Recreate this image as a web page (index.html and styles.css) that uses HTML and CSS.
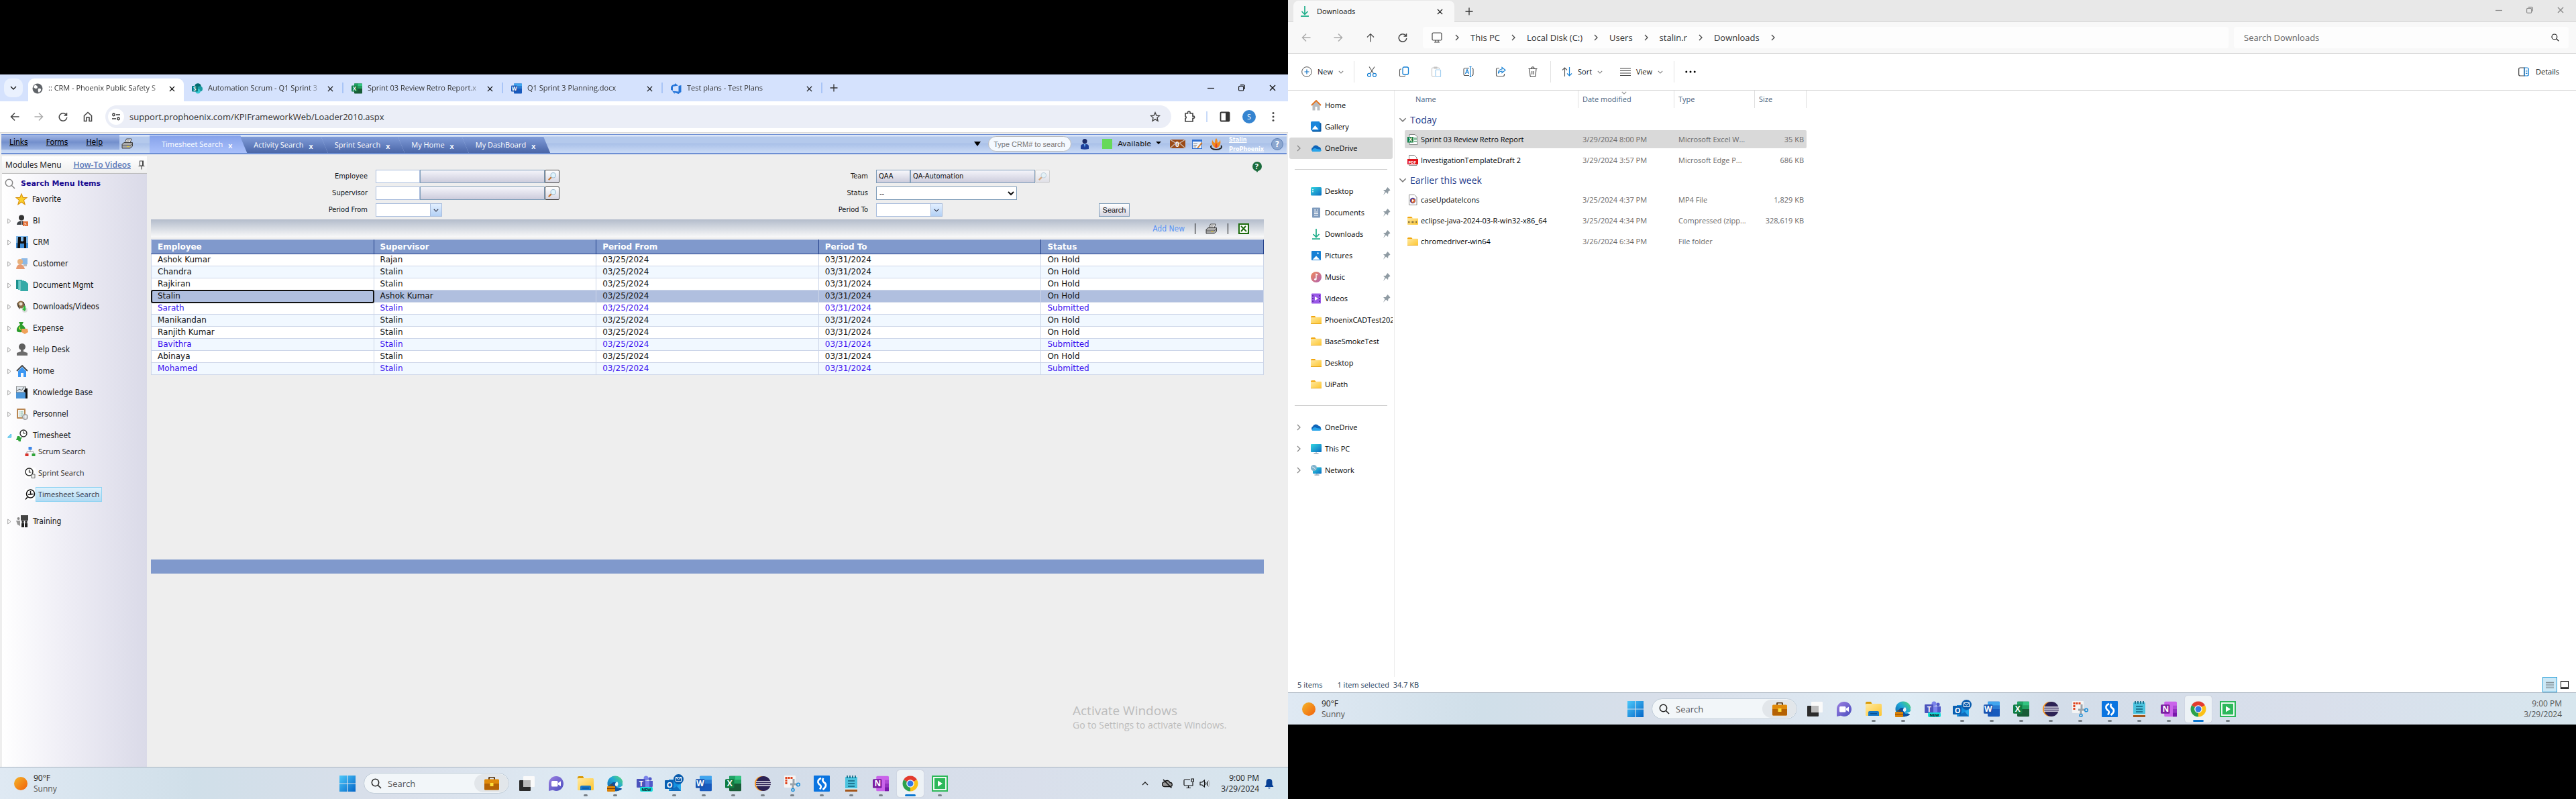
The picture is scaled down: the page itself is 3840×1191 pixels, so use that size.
FILE: index.html
```html
<!DOCTYPE html>
<html lang="en">
<head>
<meta charset="utf-8">
<title>CRM - Phoenix Public Safety</title>
<link rel="stylesheet" href="styles.css">
</head>
<body>
<svg class="paints" width="0" height="0" aria-hidden="true">
<defs>
<linearGradient id="gSun" x1="0" y1="0" x2="1" y2="1"><stop offset="0" stop-color="#f3b62a"/><stop offset="1" stop-color="#f2600c"/></linearGradient>
<linearGradient id="gWin" x1="0" y1="0" x2="1" y2="1"><stop offset="0" stop-color="#4cc8fa"/><stop offset="1" stop-color="#0466c8"/></linearGradient>
<linearGradient id="gFold" x1="0" y1="0" x2="1" y2="1"><stop offset="0" stop-color="#ffe9a0"/><stop offset="1" stop-color="#fdc52f"/></linearGradient>
<linearGradient id="gTeal" x1="0" y1="0" x2="1" y2="1"><stop offset="0" stop-color="#33d6e0"/><stop offset="1" stop-color="#0a6cc2"/></linearGradient>
<linearGradient id="gMus" x1="0" y1="0" x2="1" y2="1"><stop offset="0" stop-color="#f08a5a"/><stop offset="1" stop-color="#b060b0"/></linearGradient>
<linearGradient id="gEdge" x1="0" y1="1" x2="1" y2="0"><stop offset="0" stop-color="#0c59a4"/><stop offset=".55" stop-color="#1fa6d8"/><stop offset="1" stop-color="#5be06a"/></linearGradient>
<linearGradient id="gChat" x1="0" y1="0" x2="1" y2="1"><stop offset="0" stop-color="#9b7fe0"/><stop offset="1" stop-color="#4c4fc0"/></linearGradient>
</defs>
</svg>
<svg class="symbols" aria-hidden="true">
<symbol id="chev" viewBox="0 0 8 12"><path d="M2 2l4 4-4 4" fill="none" stroke="currentColor" stroke-width="1.3"/></symbol>
<symbol id="down" viewBox="0 0 10 6"><path d="M1 1l4 4 4-4" fill="none" stroke="currentColor" stroke-width="1.3"/></symbol>
<symbol id="close" viewBox="0 0 10 10"><path d="M1 1l8 8M9 1l-8 8" stroke="currentColor" stroke-width="1.4"/></symbol>
<symbol id="min" viewBox="0 0 10 10"><path d="M0 5.5h10" stroke="currentColor" stroke-width="1.2"/></symbol>
<symbol id="rest" viewBox="0 0 10 10"><rect x=".6" y="2.4" width="7" height="7" rx="1.5" fill="none" stroke="currentColor" stroke-width="1.1"/><path d="M3 .6h4.400q2 0 2 2V7" fill="none" stroke="currentColor" stroke-width="1.1"/></symbol>
<symbol id="plus" viewBox="0 0 12 12"><path d="M6 .5v11M.5 6h11" stroke="currentColor" stroke-width="1.3"/></symbol>
<symbol id="back" viewBox="0 0 14 14"><path d="M13.500 7H1.500M7 1.500L1.500 7 7 12.500" fill="none" stroke="currentColor" stroke-width="1.500"/></symbol>
<symbol id="fwd" viewBox="0 0 14 14"><path d="M.5 7h12M7 1.500L12.500 7 7 12.500" fill="none" stroke="currentColor" stroke-width="1.500"/></symbol>
<symbol id="up" viewBox="0 0 14 14"><path d="M7 13.500V1.500M2 6.500l5-5 5 5" fill="none" stroke="currentColor" stroke-width="1.200"/></symbol>
<symbol id="reload" viewBox="0 0 14 14"><path d="M12 4.500A5.800 5.800 0 1 0 12.800 8M12.500 1v4h-4" fill="none" stroke="currentColor" stroke-width="1.500"/></symbol>
<symbol id="home" viewBox="0 0 14 16"><path d="M1.500 6.500L7 1.500l5.500 5V14.500H9V9H5v5.500H1.500z" fill="none" stroke="currentColor" stroke-width="1.600"/></symbol>
<symbol id="tune" viewBox="0 0 14 14"><path d="M7 4h6M1 10h6" stroke="#333" stroke-width="1.600"/><circle cx="3.500" cy="4" r="1.700" fill="none" stroke="#333" stroke-width="1.400"/><circle cx="10.500" cy="10" r="1.700" fill="none" stroke="#333" stroke-width="1.400"/></symbol>
<symbol id="star" viewBox="0 0 16 16"><path d="M8 1.800l1.900 4.300 4.600.4-3.500 3.100 1.100 4.600L8 11.800l-4.100 2.400L5 9.600 1.500 6.500l4.600-.4z" fill="none" stroke="#444" stroke-width="1.400"/></symbol>
<symbol id="puzzle" viewBox="0 0 16 18"><path d="M2 4h3.500V2.800a1.800 1.800 0 0 1 3.600 0V4H13v4.200h1a1.600 1.600 0 0 1 0 3.200h-1V16H2v-4.300q2.500-1.700 0-3.500z" fill="none" stroke="#444" stroke-width="1.700"/></symbol>
<symbol id="panel" viewBox="0 0 16 16"><rect x="1.500" y="1.500" width="13" height="13" rx="1" fill="none" stroke="#333" stroke-width="1.800"/><path d="M9 2h6v12H9z" fill="#333"/></symbol>
<symbol id="dots" viewBox="0 0 16 16"><circle cx="8" cy="2.500" r="1.500" fill="#444"/><circle cx="8" cy="8" r="1.500" fill="#444"/><circle cx="8" cy="13.500" r="1.500" fill="#444"/></symbol>
<symbol id="mag" viewBox="0 0 16 16"><circle cx="6.500" cy="6.500" r="5.200" fill="none" stroke="currentColor" stroke-width="1.500"/><path d="M10.200 10.200L15 15" stroke="currentColor" stroke-width="1.600"/></symbol>
<symbol id="globe" viewBox="0 0 16 16"><circle cx="8" cy="8" r="7.500" fill="#5f6368"/><path d="M4 2.500q4 1 4 3.500t-3 2q-1 0-3-2zM9 8q5-1 4 3l-3 3q-2-2-1-6z" fill="#fff"/></symbol>
<symbol id="sp" viewBox="0 0 16 16"><circle cx="9" cy="5" r="4.800" fill="#036c70"/><circle cx="12" cy="8.500" r="4" fill="#1a9ba1"/><circle cx="9" cy="12" r="3.600" fill="#37c6d0"/><rect y="4" width="9" height="8.500" rx="1" fill="#03787c"/><text x="2" y="11" class="glyph">S</text></symbol>
<symbol id="word" viewBox="0 0 16 16"><rect x="4" y=".5" width="12" height="15" rx="1" fill="#185abd"/><path d="M4 .5h12v4H4z" fill="#41a5ee"/><path d="M4 4.500h12V8H4z" fill="#2b7cd3"/><rect y="3.500" width="9" height="9" rx="1" fill="#1b54b0"/><text x=".7" y="10.800" class="glyph">W</text></symbol>
<symbol id="excel" viewBox="0 0 16 16"><rect x="4" y=".5" width="12" height="15" rx="1" fill="#185c37"/><path d="M4 .5h6v4H4zM4 4.500h6V8H4z" fill="#21a366"/><path d="M10 .5h6v4h-6z" fill="#33c481"/><path d="M10 4.500h6V8h-6z" fill="#22a060"/><rect y="3.500" width="9" height="9" rx="1" fill="#107c41"/><text x="1.800" y="10.800" class="glyph">X</text></symbol>
<symbol id="devops" viewBox="0 0 16 16"><path d="M15.500 3v10l-4 3-6-2v2L2 11.500l9.500 1V4z M0 5.500L2 3l4-1.500V0l5 3.500L3 5v6l-3-1z" fill="#2676d9"/></symbol>
<symbol id="onenote" viewBox="0 0 16 16"><rect x="3.500" y=".5" width="12.500" height="15" rx="1" fill="#ca64ea"/><path d="M12 4.500h4V8h-4z" fill="#ae4bd5"/><path d="M12 8h4v3.500h-4z" fill="#9332bf"/><path d="M12 11.500h4v4h-4z" fill="#7719aa"/><rect y="3.500" width="9" height="9" rx="1" fill="#7a1fa2"/><text x="1.600" y="10.800" class="glyph">N</text></symbol>
<symbol id="folder" viewBox="0 0 16 16"><path d="M0 3.500q0-1.500 1.500-1.500H6l2 2.500H0z" fill="#f2a60d"/><path d="M0 4.500h6L8 3.800h7q1 0 1 1V13q0 1-1 1H1q-1 0-1-1z" fill="url(#gFold)"/><path d="M0 13.500h16" stroke="#e8a81c"/></symbol>
<symbol id="fe" viewBox="0 0 24 24"><path d="M0 3q0-2 2-2h6l2 4H0z" fill="#d99a07"/><rect y="4" width="24" height="18" rx="1.500" fill="url(#gFold)"/><path d="M4 22v-5q0-2 2-2h12q2 0 2 2v5z" fill="#1678c8"/><path d="M7 18h10v1.500H7z" fill="#0b4f90"/></symbol>
<symbol id="edge" viewBox="0 0 24 24"><circle cx="12" cy="12" r="11.500" fill="url(#gEdge)"/><path d="M12 23q11 0 11-6-6 4-9 1-3-4 0-7-7-3-9 4 1 7 7 8z" fill="#0f4f9c"/><path d="M12 15q-1-4 3-6 3 4 0 7 4 3 8-1-1-5 0-5v10z" fill="#e8f2f8"/><rect y="16" width="12" height="8" rx="1" fill="#d98208"/><path d="M4 16v-2h4v2M0 19.500h12" fill="none" stroke="#7a3d03"/></symbol>
<symbol id="start" viewBox="0 0 24 24"><path d="M0 0h11.400v11.400H0zM12.600 0H24v11.400H12.600zM0 12.600h11.400V24H0zM12.600 12.600H24V24H12.600z" fill="url(#gWin)"/></symbol>
<symbol id="brief" viewBox="0 0 24 20"><path d="M8 4V2q0-1.500 1.500-1.500h5Q16 .5 16 2v2" fill="none" stroke="#5a3a16" stroke-width="2"/><rect x="1" y="3.500" width="22" height="16" rx="1.500" fill="#e08a0a"/><path d="M1 10h22v8q0 1.500-1.500 1.500h-19Q1 19.500 1 18z" fill="#b56204"/><rect x="9.500" y="9" width="5" height="5" fill="#ffdf3a"/></symbol>
<symbol id="tview" viewBox="0 0 24 24"><rect x="1" y="7" width="17" height="16" rx="1" fill="#2b2b2b"/><rect x="7" y="1" width="17" height="16" rx="1" fill="#fafafa"/><path d="M7 7h11v10H7z" fill="#bcbcbc"/></symbol>
<symbol id="chat" viewBox="0 0 24 24"><path d="M12 1a11 11 0 1 1-5 20.800L1 23V12A11 11 0 0 1 12 1z" fill="url(#gChat)"/><rect x="5" y="8" width="9.500" height="8.500" rx="1.500" fill="#fff"/><path d="M15 11l4-2.500v7.500L15 13.500z" fill="#fff"/></symbol>
<symbol id="teams" viewBox="0 0 24 24"><circle cx="14" cy="4" r="3.500" fill="#7b83eb"/><circle cx="20" cy="5" r="2.600" fill="#5059c9"/><path d="M15 8h9v8q-2 5-9 4z" fill="#5059c9"/><path d="M8 8h11v9q-2 5-11 2z" fill="#7b83eb"/><rect y="5" width="13" height="13" rx="1" fill="#4b53bc"/><text x="3.500" y="15.500" class="glyph glyph-l">T</text><rect x="5" y="17" width="19" height="7" rx="2" fill="#12dcd8"/><text x="7.500" y="22.800" class="glyph glyph-n">NEW</text></symbol>
<symbol id="outlook" viewBox="0 0 28 28"><path d="M6 8h18v15H6z" fill="#1490df"/><path d="M6 14l9 6 9-6v11H6z" fill="#28a8ea"/><path d="M6 25l12-7 6 7z" fill="#0f6cbd"/><rect y="9" width="13" height="13" rx="1" fill="#0a5eb0"/><text x="2.800" y="19.500" class="glyph glyph-l">O</text><circle cx="20.500" cy="7.500" r="7.500" fill="#0a5cad"/><rect x="16.500" y="4.500" width="8" height="6" fill="none" stroke="#fff"/><path d="M16.500 5l4 3 4-3" fill="none" stroke="#fff"/></symbol>
<symbol id="eclipse" viewBox="0 0 24 24"><circle cx="11" cy="12" r="11" fill="#f7941e"/><circle cx="13" cy="12" r="11" fill="#2c2255"/><path d="M2 9h22M2 12h22M2 15h22" stroke="#e6e6f0" stroke-width="1.500"/></symbol>
<symbol id="snip" viewBox="0 0 24 24"><rect width="17" height="18" rx="1" fill="#f4f4f4"/><path d="M3 13V3.500h10" fill="none" stroke="#e0441f" stroke-width="3" stroke-dasharray="3 1"/><path d="M14 5v9M9 13h9M13 13v6" stroke="#9aa3ab" stroke-width="3"/><circle cx="21" cy="13.500" r="2.300" fill="none" stroke="#1d8fd8" stroke-width="1.600"/><circle cx="13" cy="21.500" r="2" fill="none" stroke="#1d8fd8" stroke-width="1.600"/></symbol>
<symbol id="sapp" viewBox="0 0 24 24"><rect width="24" height="24" rx="1" fill="#0a74e0"/><path d="M11 4Q5.500 6.500 6.500 10.500 7.500 13 10 14.500q2 2.500-1 6" fill="none" stroke="#fff" stroke-width="2.600"/><path d="M14.500 4q-2.500 3 .5 6 3.500 2 3 5t-4.500 6" fill="none" stroke="#fff" stroke-width="2.600"/></symbol>
<symbol id="notep" viewBox="0 0 24 24"><rect x="3" y="2" width="18" height="20" rx="1" fill="#4cc3de"/><path d="M6 0v4M10 0v4M14 0v4M18 0v4" stroke="#146a86" stroke-width="1.800"/><path d="M7 8h10M7 12h10M7 16h10" stroke="#11607c" stroke-width="1.600"/><path d="M3 20.500h18V24H3z" fill="#a4561b"/><path d="M3 20h18" stroke="#fff" stroke-width="1.400"/></symbol>
<symbol id="chrome" viewBox="0 0 24 24"><path d="M12 12L2 6.300A11.500 11.500 0 0 1 22 6.300z" fill="#e33b2e"/><path d="M12 12L22 6.300A11.500 11.500 0 0 1 12 23.500z" fill="#fbc116"/><path d="M12 12v11.500A11.500 11.500 0 0 1 2 6.300z" fill="#2da14c"/><circle cx="12" cy="12" r="5.800" fill="#fff"/><circle cx="12" cy="12" r="4.500" fill="#3277e6"/></symbol>
<symbol id="play" viewBox="0 0 24 24"><rect width="24" height="24" fill="#2db85a"/><rect x="3" y="3" width="18" height="18" fill="none" stroke="#fff" stroke-width="1.800"/><path d="M9 7.500v9l7-4.500z" fill="#fff"/></symbol>
<symbol id="sun" viewBox="0 0 20 20"><circle cx="10" cy="10" r="10" fill="url(#gSun)"/></symbol>
<symbol id="cloud" viewBox="0 0 16 16"><path d="M3.500 13a3.500 3.500 0 0 1-.5-6.500A5 5 0 0 1 12 6a3.600 3.600 0 0 1 .5 7z" fill="#0f64b8"/><path d="M1.500 12Q4 6 9 9l6.500 1q1 3-3 3h-9q-1.500 0-2-1z" fill="#28a4ea"/></symbol>
<symbol id="cloudoff" viewBox="0 0 16 14"><path d="M4 11.500a3.500 3.500 0 0 1 0-7 4.500 4.500 0 0 1 8 1 3 3 0 0 1 .5 6z" fill="#999" stroke="#111" stroke-width="1.300"/><path d="M2 1l12.500 12.500" stroke="#111" stroke-width="1.500"/></symbol>
<symbol id="net" viewBox="0 0 16 16"><path d="M10 2H2.500Q1 2 1 3.500v6Q1 11 2.500 11H14V6M7.500 11v3.500M4.500 14.500H11M12 1h3.400v4H12z" fill="none" stroke="#111" stroke-width="1.200"/></symbol>
<symbol id="vol" viewBox="0 0 16 14"><path d="M1 5h3l3.500-3v10L4 9H1z" fill="none" stroke="#111" stroke-width="1.100"/><path d="M9.500 5q1 2 0 4M11.500 3.500q2 3.500 0 7" fill="none" stroke="#111" stroke-width="1.100"/><path d="M13.500 2q3 5 0 10" fill="none" stroke="#aaa"/></symbol>
<symbol id="bell" viewBox="0 0 14 16"><path d="M7 1q4.500 0 4.500 5v3.500L13.500 13H.5l2-3.500V6Q2.500 1 7 1zM5 14h4q-2 3-4 0z" fill="#063f95"/></symbol>
<symbol id="pin" viewBox="0 0 12 14"><path d="M7.500 1L11.500 5.500 8.500 7.500 8 11 5 8.500 1 13 3.500 7.500 1 5h3.500z" fill="#8f9ba3"/></symbol>
<symbol id="tri" viewBox="0 0 6 9"><path d="M.7 1v7L5 4.500z" fill="#fff" stroke="#999" stroke-width=".9"/></symbol>
<symbol id="trio" viewBox="0 0 6 6"><path d="M.5 5.500h5v-5z" fill="#8ad8f5" stroke="#27aee0"/></symbol>
<symbol id="printer" viewBox="0 0 18 16"><path d="M5 7l2.500-6H15l-2 6z" fill="#fff" stroke="#333" stroke-width=".9"/><path d="M7.500 3h5M7 5h5" stroke="#555" stroke-width=".8"/><path d="M1 9l3-2.500h12.500V12L13 15H1z" fill="#aaa" stroke="#333" stroke-width=".9"/><path d="M1 11h12l3.500-3" fill="none" stroke="#444" stroke-width=".8"/><path d="M8 12.500h4" stroke="#e5d23a"/></symbol>
<symbol id="lens" viewBox="0 0 16 16"><path d="M2 14l5-5" stroke="#c9762f" stroke-width="2.500"/><circle cx="10" cy="6" r="4.300" fill="#dff3fb" stroke="#9db8cc" stroke-width="1.200"/></symbol>
<symbol id="m-fav" viewBox="0 0 16 16"><path d="M8 .8l2 5h5.300L11 9.200l1.600 5.800L8 11.800 3.400 15 5 9.200.700 5.800H6z" fill="#fbd02c" stroke="#d99411"/></symbol>
<symbol id="m-bi" viewBox="0 0 18 18"><circle cx="8" cy="4.500" r="4" fill="#333"/><path d="M1 15q0-5 7-6 6 0 7 6z" fill="#3f4348"/><path d="M8 9v6" stroke="#ddd"/><rect x="10" y="10" width="8" height="7" fill="#e0703a"/><path d="M12 15.500h1M12 12.500q3 0 3 3" stroke="#fff" fill="none"/></symbol>
<symbol id="m-crm" viewBox="0 0 18 18"><rect width="18" height="18" fill="#7fb8ea"/><path d="M0 10h18v8H0z" fill="#3d8bd4"/><path d="M3 1h4v6l2 1 2-1V1h4v17h-3v-7H6v7H2z" fill="#111"/></symbol>
<symbol id="m-cust" viewBox="0 0 18 18"><rect x="8" y="1" width="9" height="9" fill="#8db9e6"/><circle cx="6" cy="6" r="4" fill="#e8b07a"/><path d="M0 17q1-7 6-7t7 7z" fill="#e79a70"/><path d="M11 10h5v3h-5z" fill="#bbb"/></symbol>
<symbol id="m-doc" viewBox="0 0 18 18"><path d="M0 1h9v14H0z" fill="#1c8f8d"/><path d="M3 2h9v14H3z" fill="#55c0bd"/><path d="M6 3h8l4 4v11H6z" fill="#36aaa7"/><path d="M6 3v15" stroke="#c8efee" stroke-width=".8"/></symbol>
<symbol id="m-down" viewBox="0 0 18 18"><circle cx="7" cy="6" r="5.500" fill="#8a6b45"/><circle cx="7" cy="5" r="2.500" fill="#e8dfce"/><path d="M2 4l3 9M11 2l2 6" stroke="#333"/><circle cx="13" cy="14" r="4" fill="#dcdcdc"/><path d="M11 8v4H8l5 4 2-4h-1V8z" fill="#2db83c"/></symbol>
<symbol id="m-exp" viewBox="0 0 18 18"><path d="M4 0h7L9 4q6 4 5 9-7 4-13 1Q0 8 6 4z" fill="#2d9c2d"/><path d="M8 10h9l1 5-5 3-5-3z" fill="#f0a25a"/><path d="M6 7q-3 3 1 4" stroke="#d9e84a" stroke-width="1.500" fill="none"/></symbol>
<symbol id="m-help" viewBox="0 0 18 18"><circle cx="9" cy="5" r="5" fill="#5e5e5e"/><path d="M7 9h4v3l6 2v4H1v-4l6-2z" fill="#6c6c6c"/></symbol>
<symbol id="m-home" viewBox="0 0 18 18"><path d="M1 9l8-8 8 8" fill="none" stroke="#444" stroke-width="1.800"/><path d="M3 9l6-6 6 6v9h-4v-6H7v6H3z" fill="#3b97f3"/></symbol>
<symbol id="m-kb" viewBox="0 0 18 18"><rect width="14" height="9" fill="#dfe6ec" stroke="#444"/><path d="M1 7l4-3 3 2 4-5" fill="none" stroke="#555"/><path d="M0 9h14v9H0z" fill="#4b95d8"/><path d="M14 3h3v15h-3V9l-3-2z" fill="#111"/></symbol>
<symbol id="m-pers" viewBox="0 0 18 18"><rect x="1" y="1" width="13" height="15" rx="1" fill="#b98652"/><rect x="3" y="3" width="9" height="11" fill="#f5f5f2"/><path d="M4.500 6h1M6.500 6h4M4.500 9h1M6.500 9h4M4.500 12h1M6.500 12h3" stroke="#6a9"/><circle cx="13.500" cy="13.500" r="4" fill="#c9cdd0" stroke="#888"/><path d="M13.500 11v5M11 13.500h5" stroke="#fff"/></symbol>
<symbol id="m-time" viewBox="0 0 18 18"><circle cx="11" cy="6" r="5" fill="#fff" stroke="#222" stroke-width="1.300"/><path d="M11 3v3h3" fill="none" stroke="#222"/><path d="M2 10h3l1 2h3l-2 3v3H4l-1-2H0z" fill="#2fa43a"/></symbol>
<symbol id="m-scrum" viewBox="0 0 16 16"><path d="M8 5v4M3 11V8.500h10V11" stroke="#999" fill="none"/><path d="M5.500 1h5v4.500h-5z" fill="#3d86e8"/><path d="M.5 11h5v4h-5z" fill="#d8322a"/><path d="M10.500 11h5v4h-5z" fill="#2fa43a"/></symbol>
<symbol id="m-sprint" viewBox="0 0 16 16"><rect width="16" height="16" fill="#fff"/><circle cx="6.500" cy="6.500" r="5.500" fill="#fff" stroke="#222" stroke-width="1.400"/><path d="M6.500 3v4h3" fill="none" stroke="#222" stroke-width="1.200"/><path d="M10 10h5v5.500h-5z" fill="#eee" stroke="#666"/></symbol>
<symbol id="m-tss" viewBox="0 0 16 16"><rect width="16" height="16" fill="#fff"/><circle cx="8.500" cy="7" r="6" fill="#fff" stroke="#111" stroke-width="1.600"/><path d="M8.500 3v4.500h4M5 8h5M4 12l-3 3.500" fill="none" stroke="#111" stroke-width="1.500"/></symbol>
<symbol id="m-train" viewBox="0 0 18 18"><rect x="7" y="0" width="11" height="8" fill="#444"/><circle cx="3.500" cy="5" r="2" fill="#888"/><path d="M0 8h6v8l-4-2z" fill="#999"/><circle cx="10" cy="10" r="1.800" fill="#222"/><circle cx="15" cy="10" r="1.800" fill="#222"/><path d="M8 12h4v6H8zM13 12h4v6h-4z" fill="#222"/></symbol>
<symbol id="person" viewBox="0 0 12 16"><circle cx="6" cy="3.500" r="3.500" fill="#1b2a66"/><path d="M0 15V11q0-3.500 6-3.500t6 3.500v4q-6 1.500-12 0z" fill="#1d3f9a"/><path d="M5 8h2l-1 5z" fill="#6fc3ff"/></symbol>
<symbol id="mail" viewBox="0 0 23 13"><rect width="23" height="13" fill="#9a4a17"/><path d="M0 0l11.500 7L23 0M0 13l8-7M23 13l-8-7" fill="none" stroke="#c9b8ac" stroke-width="1.400"/><text x="8" y="11" class="glyph glyph-m">0</text></symbol>
<symbol id="note" viewBox="0 0 16 14"><rect x=".5" y=".5" width="14" height="13" fill="#eef4fc" stroke="#2d6fd0"/><path d="M0 0h15v3H0z" fill="#2d6fd0"/><path d="M2 6h6M2 8.500h5M2 11h4" stroke="#888"/><path d="M7 13l7-9 1.500 1.500L9 13z" fill="#d87b22"/></symbol>
<symbol id="phx" viewBox="0 0 22 20"><path d="M4 12a8 4 0 1 0 14 0" fill="none" stroke="#222" stroke-width="2"/><path d="M11 16Q3 13 5 3q1 4 4 5 0-5 2-7 2 2 2 7 3-1 4-5 2 10-6 13z" fill="#f08a1c"/><path d="M11 16q-3-3 0-8 3 5 0 8z" fill="#e0402a"/></symbol>
<symbol id="xls" viewBox="0 0 16 16"><rect width="16" height="16" fill="#1d6b0d"/><path d="M2.500 2.500h11v11h-11z" fill="#fff" stroke="#fff"/><path d="M4 4l8 8M11 4l-7 8" stroke="#1d6b0d" stroke-width="2"/></symbol>
<symbol id="qgreen" viewBox="0 0 16 16"><circle cx="8" cy="7" r="7" fill="#1b6b3c"/><path d="M6 13l2 3 2-3z" fill="#1b6b3c"/><text x="4.800" y="11" class="glyph glyph-q">?</text></symbol>
<symbol id="pushpin" viewBox="0 0 10 14"><path d="M2.500 1h5v7h-5zM.5 8.500h9M5 9v4.500M6.500 1v7" fill="none" stroke="#444" stroke-width="1.100"/></symbol>
<symbol id="dl" viewBox="0 0 16 16"><path d="M8 0v12M3.500 8L8 12.500 12.500 8M2 15.200h12" fill="none" stroke="#1fae8a" stroke-width="1.700"/></symbol>
<symbol id="pc" viewBox="0 0 16 16"><rect x="1" y="1" width="14" height="11" rx="1.500" fill="none" stroke="#444" stroke-width="1.200"/><path d="M6 12v3M10 12v3M4 15h8" stroke="#444" stroke-width="1.200"/></symbol>
<symbol id="x-home" viewBox="0 0 16 16"><path d="M2.500 7L8 2l5.500 5v8.500h-4V10h-3v5.500h-4z" fill="#b9bcc0"/><path d="M1 8l7-7 7 7" fill="none" stroke="#e2711d" stroke-width="1.800"/></symbol>
<symbol id="x-gal" viewBox="0 0 16 16"><rect x="2" y="2" width="13.500" height="13.500" rx="1.500" fill="#0b5ba5"/><rect y="0" width="13.500" height="13.500" rx="1.500" fill="#1a86db"/><path d="M1.500 12l5-6 5 6z" fill="#fff"/></symbol>
<symbol id="x-pic" viewBox="0 0 16 16"><rect x="1" y="1" width="14" height="14" rx="1" fill="#1680d4"/><path d="M2.500 14L8 8.500 13.500 14z" fill="#fff"/><circle cx="10.500" cy="4.500" r="1.300" fill="#cfe8fb"/></symbol>
<symbol id="x-desk" viewBox="0 0 16 16"><rect y="2" width="16" height="12.500" rx="1.500" fill="url(#gTeal)"/><path d="M3 5v1.500M3 8v1.500" stroke="#fff" stroke-width="1.500"/></symbol>
<symbol id="x-doc" viewBox="0 0 16 16"><rect x="2" y=".5" width="12" height="15" rx="1" fill="#7f9bbd"/><path d="M5 4h3M5 7h6M5 9.500h6M5 12h6M9 4h2" stroke="#fff" stroke-width="1.200"/></symbol>
<symbol id="x-mus" viewBox="0 0 16 16"><circle cx="8" cy="8" r="8" fill="url(#gMus)"/><path d="M8 11.500V3.500l2.500 1.500" fill="none" stroke="#fff" stroke-width="1.300"/><circle cx="6.700" cy="11.300" r="1.600" fill="#fff"/></symbol>
<symbol id="x-vid" viewBox="0 0 16 16"><rect x="1" y=".5" width="14" height="15" rx="1" fill="#9a58e8"/><path d="M3 3v10M13 3v10" stroke="#4b2a85" stroke-width="1.500" stroke-dasharray="2 2"/><path d="M6 5v6l5-3z" fill="#fff"/></symbol>
<symbol id="x-pc" viewBox="0 0 16 16"><rect y="1" width="16" height="12" rx="1" fill="url(#gTeal)"/><path d="M8 13v2M4.500 15h7" stroke="#9ab" stroke-width="1.300"/></symbol>
<symbol id="x-net" viewBox="0 0 16 16"><rect x="3" y="3.500" width="13" height="9.500" rx="1" fill="url(#gTeal)"/><circle cx="4.500" cy="4.500" r="4.500" fill="#7fb2cc"/><path d="M2 3q3 0 5 4" stroke="#e4f2f8" fill="none"/><path d="M9 13v2M5.500 15h7" stroke="#9ab" stroke-width="1.300"/></symbol>
<symbol id="f-xls" viewBox="0 0 16 16"><path d="M3 .5h8L15 4v11.500H3z" fill="#fff" stroke="#888"/><path d="M10 6h4M10 8.500h4M10 11h4" stroke="#107c41"/><rect y="4" width="9" height="8.500" fill="#107c41"/><text x="2" y="11" class="glyph">X</text></symbol>
<symbol id="f-pdf" viewBox="0 0 16 16"><path d="M2.500 .5h8L14 4v11.500H2.500z" fill="#fff" stroke="#888"/><rect y="6" width="16" height="8" fill="#e2141c"/><text x="1.600" y="12.600" class="glyph glyph-s">PDF</text></symbol>
<symbol id="f-mp4" viewBox="0 0 16 16"><path d="M2.500 .5h8L14 4v11.500H2.500z" fill="#fff" stroke="#888"/><circle cx="8" cy="9" r="4.200" fill="#4b3fa0"/><circle cx="8.500" cy="9.500" r="3" fill="#e06a2c"/><path d="M7 7v4l3-2z" fill="#fff"/></symbol>
<symbol id="f-zip" viewBox="0 0 16 16"><path d="M0 3.500q0-1.500 1.500-1.500H6l2 2.500H0z" fill="#f2a60d"/><path d="M0 4.500h16V13q0 1-1 1H1q-1 0-1-1z" fill="url(#gFold)"/><path d="M1 10h14" stroke="#7b6a3c" stroke-width="2.500" stroke-dasharray="1 1"/></symbol>
<symbol id="c-new" viewBox="0 0 16 16"><circle cx="8" cy="8" r="7.300" fill="none" stroke="#555"/><path d="M8 4.500v7M4.500 8h7" stroke="#1172c4" stroke-width="1.200"/></symbol>
<symbol id="c-cut" viewBox="0 0 16 16"><path d="M4 .5l6.500 10M12 .5L5.500 10.500" stroke="#555" stroke-width="1.100"/><circle cx="4" cy="12.800" r="2.500" fill="none" stroke="#1680d4" stroke-width="1.200"/><circle cx="12" cy="12.800" r="2.500" fill="none" stroke="#1680d4" stroke-width="1.200"/></symbol>
<symbol id="c-copy" viewBox="0 0 16 16"><path d="M4 4H3Q1.500 4 1.500 5.500v8Q1.500 15 3 15h5q1.500 0 1.500-1.500" fill="none" stroke="#555" stroke-width="1.100"/><rect x="6" y="1" width="8.500" height="11" rx="2" fill="none" stroke="#1680d4" stroke-width="1.300"/></symbol>
<symbol id="c-paste" viewBox="0 0 16 16"><path d="M6 15H3Q1.500 15 1.500 13.500v-10Q1.500 2 3 2h8q1.500 0 1.500 1.500V4M5 1h4v2H5z" fill="none" stroke="#c4c4c4" stroke-width="1.100"/><rect x="7" y="5" width="7.500" height="10.500" rx="1" fill="none" stroke="#9fcdf0" stroke-width="1.200"/></symbol>
<symbol id="c-ren" viewBox="0 0 16 16"><path d="M9 2.500H3Q1 2.500 1 4.500v7q0 2 2 2h6M13 2.500q2 0 2 2v7q0 2-2 2" fill="none" stroke="#555" stroke-width="1.100"/><path d="M11 .5v15M9.500 .5h3M9.500 15.500h3M3.500 11L6 4.500 8.500 11M4.500 9h3" fill="none" stroke="#1680d4" stroke-width="1.200"/></symbol>
<symbol id="c-share" viewBox="0 0 16 16"><path d="M6 2.500H3.500Q1.500 2.500 1.500 4.500v8q0 2 2 2h8q2 0 2-2V11" fill="none" stroke="#555" stroke-width="1.100"/><path d="M10 1.500L15 5.500l-5 4V7q-4 0-5.500 3.500Q4.500 4.500 10 4z" fill="none" stroke="#1680d4" stroke-width="1.200"/></symbol>
<symbol id="c-del" viewBox="0 0 16 16"><path d="M1.500 3.500h13M3 3.500l1 10.500q.1 1.500 1.500 1.500h5q1.400 0 1.500-1.500l1-10.500M6 3Q6 .8 8 .8T10 3M6.700 7v5M9.300 7v5" fill="none" stroke="#444" stroke-width="1.100"/></symbol>
<symbol id="c-sort" viewBox="0 0 16 16"><path d="M4.500 15V2M1 5.500L4.500 2 8 5.500" fill="none" stroke="#555" stroke-width="1.100"/><path d="M11.500 1v13M8 10.500l3.500 3.500 3.500-3.500" fill="none" stroke="#1680d4" stroke-width="1.200"/></symbol>
<symbol id="c-view" viewBox="0 0 16 16"><path d="M0 3h16M0 6.500h16M0 10h16M0 13.500h16" stroke="#444"/></symbol>
<symbol id="c-more" viewBox="0 0 16 16"><circle cx="1.800" cy="8" r="1.500"/><circle cx="8" cy="8" r="1.500"/><circle cx="14.200" cy="8" r="1.500"/></symbol>
<symbol id="c-det" viewBox="0 0 16 14"><path d="M9 1H3Q.7 1 .7 3v8q0 2 2.300 2h6z" fill="none" stroke="#444" stroke-width="1.200"/><path d="M9 1h4q2.300 0 2.300 2v8q0 2-2.300 2H9zM11 4.500h2.500M11 7h2.500M11 9.500h2.500" fill="none" stroke="#1680d4" stroke-width="1.200"/></symbol>
</svg>

<section class="screen screen-left">
  <div class="browser">
    <div class="tabstrip">
      <button class="tabsearch" aria-label="Search tabs"><svg class="i10"><use href="#down"/></svg></button>
      <div class="ctab ctab-on"><svg class="i16"><use href="#globe"/></svg><span class="ctitle">:: CRM - Phoenix Public Safety S</span><svg class="i9"><use href="#close"/></svg></div>
      <div class="ctab"><svg class="i16"><use href="#sp"/></svg><span class="ctitle">Automation Scrum - Q1 Sprint 3</span><svg class="i9"><use href="#close"/></svg></div>
      <div class="ctab"><svg class="i16"><use href="#excel"/></svg><span class="ctitle">Sprint 03 Review Retro Report.x</span><svg class="i9"><use href="#close"/></svg></div>
      <div class="ctab"><svg class="i16"><use href="#word"/></svg><span class="ctitle">Q1 Sprint 3 Planning.docx</span><svg class="i9"><use href="#close"/></svg></div>
      <div class="ctab"><svg class="i16"><use href="#devops"/></svg><span class="ctitle">Test plans - Test Plans</span><svg class="i9"><use href="#close"/></svg></div>
      <button class="newtab" aria-label="New tab"><svg class="i12"><use href="#plus"/></svg></button>
      <div class="wctl"><svg class="i10"><use href="#min"/></svg><svg class="i10"><use href="#rest"/></svg><svg class="i10"><use href="#close"/></svg></div>
    </div>
    <div class="urlbar">
      <div class="navs"><svg class="i14"><use href="#back"/></svg><svg class="i14 dim"><use href="#fwd"/></svg><svg class="i14"><use href="#reload"/></svg><svg class="i16"><use href="#home"/></svg></div>
      <label class="omni"><span class="tune"><svg class="i14"><use href="#tune"/></svg></span><input class="url" aria-label="Address" value="support.prophoenix.com/KPIFrameworkWeb/Loader2010.aspx"><svg class="i16"><use href="#star"/></svg></label>
      <div class="ext"><svg class="i18"><use href="#puzzle"/></svg><i class="vline"></i><svg class="i16"><use href="#panel"/></svg><span class="avatar">S</span><svg class="i16"><use href="#dots"/></svg></div>
    </div>

    <div class="crm">
      <header class="crmbar">
        <nav class="links"><a href="#l">Links</a><a href="#f">Forms</a><a href="#h">Help</a></nav>
        <svg class="i18 barprint"><use href="#printer"/></svg>
        <div class="apptabs">
          <button class="atab atab-on">Timesheet Search <b>x</b></button>
          <button class="atab">Activity Search <b>x</b></button>
          <button class="atab">Sprint Search <b>x</b></button>
          <button class="atab">My Home <b>x</b></button>
          <button class="atab">My DashBoard <b>x</b></button>
        </div>
        <div class="tools">
          <span class="caret"></span>
          <input class="crmsearch" aria-label="CRM search" placeholder="Type CRM# to search">
          <svg class="ic-person"><use href="#person"/></svg>
          <span class="status"><i class="green"></i>Available<span class="caret caret-s"></span></span>
          <svg class="ic-mail"><use href="#mail"/></svg>
          <svg class="i16"><use href="#note"/></svg>
          <svg class="ic-phx"><use href="#phx"/></svg>
          <a class="user" href="#u">Stalin ProPhoenix</a>
          <span class="qmark">?</span>
        </div>
      </header>
      <div class="crmbody">
        <aside class="side">
          <div class="sidehead"><span>Modules Menu</span><a href="#v">How-To Videos</a><svg class="ic-push"><use href="#pushpin"/></svg></div>
          <div class="menu">
            <div class="msearch"><svg class="i16"><use href="#mag"/></svg><b>Search Menu Items</b></div>
            <div class="mi mi-fav"><svg class="i18"><use href="#m-fav"/></svg>Favorite</div>
            <div class="mi"><svg class="tri"><use href="#tri"/></svg><svg class="i18"><use href="#m-bi"/></svg>BI</div>
            <div class="mi"><svg class="tri"><use href="#tri"/></svg><svg class="i18"><use href="#m-crm"/></svg>CRM</div>
            <div class="mi"><svg class="tri"><use href="#tri"/></svg><svg class="i18"><use href="#m-cust"/></svg>Customer</div>
            <div class="mi"><svg class="tri"><use href="#tri"/></svg><svg class="i18"><use href="#m-doc"/></svg>Document Mgmt</div>
            <div class="mi"><svg class="tri"><use href="#tri"/></svg><svg class="i18"><use href="#m-down"/></svg>Downloads/Videos</div>
            <div class="mi"><svg class="tri"><use href="#tri"/></svg><svg class="i18"><use href="#m-exp"/></svg>Expense</div>
            <div class="mi"><svg class="tri"><use href="#tri"/></svg><svg class="i18"><use href="#m-help"/></svg>Help Desk</div>
            <div class="mi"><svg class="tri"><use href="#tri"/></svg><svg class="i18"><use href="#m-home"/></svg>Home</div>
            <div class="mi"><svg class="tri"><use href="#tri"/></svg><svg class="i18"><use href="#m-kb"/></svg>Knowledge Base</div>
            <div class="mi"><svg class="tri"><use href="#tri"/></svg><svg class="i18"><use href="#m-pers"/></svg>Personnel</div>
            <div class="mi"><svg class="tri"><use href="#trio"/></svg><svg class="i18"><use href="#m-time"/></svg>Timesheet</div>
            <div class="submenu">
              <div class="smi"><svg class="i16"><use href="#m-scrum"/></svg><span>Scrum Search</span></div>
              <div class="smi"><svg class="i16"><use href="#m-sprint"/></svg><span>Sprint Search</span></div>
              <div class="smi"><svg class="i16"><use href="#m-tss"/></svg><span class="picked">Timesheet Search</span></div>
            </div>
            <div class="mi"><svg class="tri"><use href="#tri"/></svg><svg class="i18"><use href="#m-train"/></svg>Training</div>
          </div>
        </aside>
        <main class="work">
          <svg class="helpdot"><use href="#qgreen"/></svg>
          <form class="filters">
            <label for="emp">Employee</label>
            <div class="field"><input id="emp" class="code"><input class="desc" aria-label="Employee name" readonly><button type="button" class="look" aria-label="Find employee"><svg class="i14"><use href="#lens"/></svg></button></div>
            <label for="team">Team</label>
            <div class="field"><input id="team" class="code code-ro" value="QAA" readonly><input class="desc" aria-label="Team name" value="QA-Automation" readonly><button type="button" class="look look-off" aria-label="Find team" disabled><svg class="i14"><use href="#lens"/></svg></button></div>
            <label for="sup">Supervisor</label>
            <div class="field"><input id="sup" class="code"><input class="desc" aria-label="Supervisor name" readonly><button type="button" class="look" aria-label="Find supervisor"><svg class="i14"><use href="#lens"/></svg></button></div>
            <label for="st">Status</label>
            <div class="field"><select id="st" class="sel"><option>--</option></select></div>
            <label for="pf">Period From</label>
            <div class="field"><input id="pf" class="date"><button type="button" class="dd" aria-label="Pick start"><svg class="i8"><use href="#down"/></svg></button></div>
            <label for="pt">Period To</label>
            <div class="field"><input id="pt" class="date"><button type="button" class="dd" aria-label="Pick end"><svg class="i8"><use href="#down"/></svg></button><button type="button" class="go">Search</button></div>
          </form>
          <div class="gridbar"><a href="#a">Add New</a><i></i><svg class="i18"><use href="#printer"/></svg><i></i><svg class="i16"><use href="#xls"/></svg></div>
          <table class="grid">
            <thead><tr><th>Employee</th><th>Supervisor</th><th>Period From</th><th>Period To</th><th>Status</th></tr></thead>
            <tbody>
            <tr><td>Ashok Kumar</td><td>Rajan</td><td>03/25/2024</td><td>03/31/2024</td><td>On Hold</td></tr>
            <tr><td>Chandra</td><td>Stalin</td><td>03/25/2024</td><td>03/31/2024</td><td>On Hold</td></tr>
            <tr><td>Rajkiran</td><td>Stalin</td><td>03/25/2024</td><td>03/31/2024</td><td>On Hold</td></tr>
            <tr class="cur"><td>Stalin</td><td>Ashok Kumar</td><td>03/25/2024</td><td>03/31/2024</td><td>On Hold</td></tr>
            <tr class="sub"><td>Sarath</td><td>Stalin</td><td>03/25/2024</td><td>03/31/2024</td><td>Submitted</td></tr>
            <tr><td>Manikandan</td><td>Stalin</td><td>03/25/2024</td><td>03/31/2024</td><td>On Hold</td></tr>
            <tr><td>Ranjith Kumar</td><td>Stalin</td><td>03/25/2024</td><td>03/31/2024</td><td>On Hold</td></tr>
            <tr class="sub"><td>Bavithra</td><td>Stalin</td><td>03/25/2024</td><td>03/31/2024</td><td>Submitted</td></tr>
            <tr><td>Abinaya</td><td>Stalin</td><td>03/25/2024</td><td>03/31/2024</td><td>On Hold</td></tr>
            <tr class="sub"><td>Mohamed</td><td>Stalin</td><td>03/25/2024</td><td>03/31/2024</td><td>Submitted</td></tr>
            </tbody>
          </table>
          <div class="pager"></div>
          <div class="watermark"><p class="wm1">Activate Windows</p><p class="wm2">Go to Settings to activate Windows.</p></div>
        </main>
      </div>
    </div>
  </div>
  <footer class="taskbar">
    <div class="weather"><svg class="i20"><use href="#sun"/></svg><div>90°F<span>Sunny</span></div></div>
    <div class="apps">
      <svg class="i24"><use href="#start"/></svg>
      <label class="tsearch"><svg class="i16"><use href="#mag"/></svg><input placeholder="Search" aria-label="Search Windows"><span class="tbrief"><svg class="ic-brief"><use href="#brief"/></svg></span></label>
      <div class="ti"><svg class="i24"><use href="#tview"/></svg></div>
      <div class="ti"><svg class="i24"><use href="#chat"/></svg></div>
      <div class="ti run"><svg class="i24"><use href="#fe"/></svg></div>
      <div class="ti run"><svg class="i24"><use href="#edge"/></svg></div>
      <div class="ti"><svg class="i24"><use href="#teams"/></svg></div>
      <div class="ti run"><svg class="i28"><use href="#outlook"/></svg></div>
      <div class="ti run"><svg class="i24"><use href="#word"/></svg></div>
      <div class="ti run"><svg class="i24"><use href="#excel"/></svg></div>
      <div class="ti run"><svg class="i24"><use href="#eclipse"/></svg></div>
      <div class="ti run"><svg class="i24"><use href="#snip"/></svg></div>
      <div class="ti run"><svg class="i24"><use href="#sapp"/></svg></div>
      <div class="ti run"><svg class="i24"><use href="#notep"/></svg></div>
      <div class="ti run"><svg class="i24"><use href="#onenote"/></svg></div>
      <div class="ti run now"><svg class="i24"><use href="#chrome"/></svg></div>
      <div class="ti run"><svg class="i24"><use href="#play"/></svg></div>
    </div>
    <div class="tray"><svg class="i10 flip"><use href="#down"/></svg><svg class="i16 ic-od"><use href="#cloudoff"/></svg><svg class="i16"><use href="#net"/></svg><svg class="i16 ic-vol"><use href="#vol"/></svg><div class="clock">9:00 PM<br>3/29/2024</div><svg class="i14 ic-bell"><use href="#bell"/></svg></div>
  </footer>
</section>

<section class="screen screen-right">
  <div class="explorer">
    <div class="xtabs">
      <div class="xtab"><svg class="i16"><use href="#dl"/></svg><span>Downloads</span><svg class="i9"><use href="#close"/></svg></div>
      <button class="newtab" aria-label="New tab"><svg class="i12"><use href="#plus"/></svg></button>
      <div class="wctl wctl-dim"><svg class="i10"><use href="#min"/></svg><svg class="i10"><use href="#rest"/></svg><svg class="i10"><use href="#close"/></svg></div>
    </div>
    <div class="xaddr">
      <div class="xnav"><svg class="i14 dim"><use href="#back"/></svg><svg class="i14 dim"><use href="#fwd"/></svg><svg class="i14"><use href="#up"/></svg><svg class="i14"><use href="#reload"/></svg></div>
      <div class="crumbs"><svg class="i16"><use href="#pc"/></svg><svg class="ch"><use href="#chev"/></svg><span>This PC</span><svg class="ch"><use href="#chev"/></svg><span>Local Disk (C:)</span><svg class="ch"><use href="#chev"/></svg><span>Users</span><svg class="ch"><use href="#chev"/></svg><span>stalin.r</span><svg class="ch"><use href="#chev"/></svg><span>Downloads</span><svg class="ch"><use href="#chev"/></svg></div>
      <label class="xsearch"><input placeholder="Search Downloads" aria-label="Search Downloads"><svg class="i12"><use href="#mag"/></svg></label>
    </div>
    <div class="xcmd">
      <button class="cb cb-new"><svg class="i16"><use href="#c-new"/></svg>New<svg class="i6"><use href="#down"/></svg></button>
      <i></i>
      <button class="ci" aria-label="Cut"><svg class="i16"><use href="#c-cut"/></svg></button>
      <button class="ci" aria-label="Copy"><svg class="i16"><use href="#c-copy"/></svg></button>
      <button class="ci" aria-label="Paste"><svg class="i16"><use href="#c-paste"/></svg></button>
      <button class="ci" aria-label="Rename"><svg class="i16"><use href="#c-ren"/></svg></button>
      <button class="ci" aria-label="Share"><svg class="i16"><use href="#c-share"/></svg></button>
      <button class="ci" aria-label="Delete"><svg class="i16"><use href="#c-del"/></svg></button>
      <i></i>
      <button class="cb cb-sort"><svg class="i16"><use href="#c-sort"/></svg>Sort<svg class="i6"><use href="#down"/></svg></button>
      <button class="cb cb-view"><svg class="i16"><use href="#c-view"/></svg>View<svg class="i6"><use href="#down"/></svg></button>
      <i></i>
      <button class="ci ci-more" aria-label="More"><svg class="i16"><use href="#c-more"/></svg></button>
      <button class="cb cb-det"><svg class="i16"><use href="#c-det"/></svg>Details</button>
    </div>
    <div class="xbody">
      <nav class="xside">
        <div class="xi"><svg class="i16"><use href="#x-home"/></svg>Home</div>
        <div class="xi"><svg class="i16"><use href="#x-gal"/></svg>Gallery</div>
        <div class="xi xi-tree xi-on"><svg class="ch"><use href="#chev"/></svg><svg class="i16"><use href="#cloud"/></svg>OneDrive</div>
        <hr>
        <div class="xi"><svg class="i16"><use href="#x-desk"/></svg>Desktop<svg class="pin"><use href="#pin"/></svg></div>
        <div class="xi"><svg class="i16"><use href="#x-doc"/></svg>Documents<svg class="pin"><use href="#pin"/></svg></div>
        <div class="xi"><svg class="i16"><use href="#dl"/></svg>Downloads<svg class="pin"><use href="#pin"/></svg></div>
        <div class="xi"><svg class="i16"><use href="#x-pic"/></svg>Pictures<svg class="pin"><use href="#pin"/></svg></div>
        <div class="xi"><svg class="i16"><use href="#x-mus"/></svg>Music<svg class="pin"><use href="#pin"/></svg></div>
        <div class="xi"><svg class="i16"><use href="#x-vid"/></svg>Videos<svg class="pin"><use href="#pin"/></svg></div>
        <div class="xi"><svg class="i16"><use href="#folder"/></svg>PhoenixCADTest202</div>
        <div class="xi"><svg class="i16"><use href="#folder"/></svg>BaseSmokeTest</div>
        <div class="xi"><svg class="i16"><use href="#folder"/></svg>Desktop</div>
        <div class="xi"><svg class="i16"><use href="#folder"/></svg>UiPath</div>
        <hr>
        <div class="xi xi-tree"><svg class="ch"><use href="#chev"/></svg><svg class="i16"><use href="#cloud"/></svg>OneDrive</div>
        <div class="xi xi-tree"><svg class="ch"><use href="#chev"/></svg><svg class="i16"><use href="#x-pc"/></svg>This PC</div>
        <div class="xi xi-tree"><svg class="ch"><use href="#chev"/></svg><svg class="i16"><use href="#x-net"/></svg>Network</div>
      </nav>
      <div class="xfiles">
        <div class="fhead"><span>Name</span><span class="sorted">Date modified<svg class="i8"><use href="#down"/></svg></span><span>Type</span><span>Size</span></div>
        <h2 class="grp grp-first"><svg class="i12"><use href="#down"/></svg>Today</h2>
        <div class="frow frow-on"><span class="fn"><svg class="i16"><use href="#f-xls"/></svg>Sprint 03 Review Retro Report</span><span>3/29/2024 8:00 PM</span><span>Microsoft Excel W...</span><span class="sz">35 KB</span></div>
        <div class="frow"><span class="fn"><svg class="i16"><use href="#f-pdf"/></svg>InvestigationTemplateDraft 2</span><span>3/29/2024 3:57 PM</span><span>Microsoft Edge P...</span><span class="sz">686 KB</span></div>
        <h2 class="grp"><svg class="i12"><use href="#down"/></svg>Earlier this week</h2>
        <div class="frow"><span class="fn"><svg class="i16"><use href="#f-mp4"/></svg>caseUpdateIcons</span><span>3/25/2024 4:37 PM</span><span>MP4 File</span><span class="sz">1,829 KB</span></div>
        <div class="frow"><span class="fn"><svg class="i16"><use href="#f-zip"/></svg>eclipse-java-2024-03-R-win32-x86_64</span><span>3/25/2024 4:34 PM</span><span>Compressed (zipp...</span><span class="sz">328,619 KB</span></div>
        <div class="frow"><span class="fn"><svg class="i16"><use href="#folder"/></svg>chromedriver-win64</span><span>3/26/2024 6:34 PM</span><span>File folder</span><span class="sz"></span></div>
      </div>
    </div>
    <div class="xstatus"><span>5 items</span><span>1 item selected&nbsp; 34.7 KB</span><div class="vbtns"><button class="vb vb-on" aria-label="Details view"><svg class="i12"><use href="#c-view"/></svg></button><button class="vb" aria-label="Large icons"><i></i></button></div></div>
  </div>
  <footer class="taskbar taskbar-far">
    <div class="weather"><svg class="i20"><use href="#sun"/></svg><div>90°F<span>Sunny</span></div></div>
    <div class="apps">
      <svg class="i24"><use href="#start"/></svg>
      <label class="tsearch"><svg class="i16"><use href="#mag"/></svg><input placeholder="Search" aria-label="Search Windows"><span class="tbrief"><svg class="ic-brief"><use href="#brief"/></svg></span></label>
      <div class="ti"><svg class="i24"><use href="#tview"/></svg></div>
      <div class="ti"><svg class="i24"><use href="#chat"/></svg></div>
      <div class="ti run"><svg class="i24"><use href="#fe"/></svg></div>
      <div class="ti run"><svg class="i24"><use href="#edge"/></svg></div>
      <div class="ti"><svg class="i24"><use href="#teams"/></svg></div>
      <div class="ti run"><svg class="i28"><use href="#outlook"/></svg></div>
      <div class="ti run"><svg class="i24"><use href="#word"/></svg></div>
      <div class="ti run"><svg class="i24"><use href="#excel"/></svg></div>
      <div class="ti run"><svg class="i24"><use href="#eclipse"/></svg></div>
      <div class="ti run"><svg class="i24"><use href="#snip"/></svg></div>
      <div class="ti run"><svg class="i24"><use href="#sapp"/></svg></div>
      <div class="ti run"><svg class="i24"><use href="#notep"/></svg></div>
      <div class="ti run"><svg class="i24"><use href="#onenote"/></svg></div>
      <div class="ti run now"><svg class="i24"><use href="#chrome"/></svg></div>
      <div class="ti run"><svg class="i24"><use href="#play"/></svg></div>
    </div>
    <div class="tray"><div class="clock">9:00 PM<br>3/29/2024</div></div>
  </footer>
</section>
</body>
</html>
```
FILE: styles.css
```css
* { box-sizing: border-box; }
body {
  margin: 0;
  min-height: 100vh;
  background: #000;
  color: #111;
  font: 12px/16px "Open Sans", "Noto Sans", sans-serif;
  display: grid;
  grid-template-columns: 1fr 1fr;
}
button, input, select { font: inherit; color: inherit; margin: 0; padding: 0; border: 0; background: none; border-radius: 0; min-width: 0; }
svg { display: block; flex: none; }
.paints { position: absolute; }
.symbols { display: none; }
.glyph { font: bold 8px "Open Sans", sans-serif; fill: #fff; }
.glyph-l { font-size: 11px; }
.glyph-n { font-size: 6px; fill: #111; }
.glyph-m { font-size: 10px; }
.glyph-s { font-size: 6px; }
.glyph-q { font-size: 11px; }
.i6 { width: 8px; height: 5px; color: #777; }
.i8 { width: 8px; height: 5px; }
.i9 { width: 9px; height: 9px; }
.i10 { width: 10px; height: 10px; }
.i12 { width: 12px; height: 12px; }
.i14 { width: 14px; height: 14px; }
.i16 { width: 16px; height: 16px; }
.i18 { width: 18px; height: 18px; }
.i20 { width: 20px; height: 20px; }
.i24 { width: 24px; height: 24px; }
.i28 { width: 28px; height: 28px; }
.ch { width: 8px; height: 12px; color: #444; }
.dim { color: #aaa; }

.screen { display: flex; flex-direction: column; min-width: 0; }
.screen-left { padding-top: 111px; }
.screen-right { padding-bottom: 111px; }
.browser, .explorer { flex: 1; display: flex; flex-direction: column; min-width: 0; }

/* browser frame */
.tabstrip { height: 40px; background: #d5e2fd; display: flex; padding: 6px 0 0 6px; }
.tabsearch { width: 28px; height: 28px; border-radius: 10px; background: #eaf1fe; display: grid; place-items: center; }
.ctab { width: 238px; height: 34px; display: flex; align-items: center; gap: 8px; padding: 0 15px 6px 12px; position: relative; font-size: 11px; }
.ctab svg { margin-top: 2px; }
.tabsearch + .ctab { margin-left: 8px; width: 232px; padding: 0 13px 6px 6px; }
.ctab-on { background: #fff; border-radius: 9px 9px 0 0; }
.ctitle { flex: 1; overflow: hidden; white-space: nowrap; color: #333; -webkit-mask-image: linear-gradient(90deg, #000 88%, transparent); mask-image: linear-gradient(90deg, #000 88%, transparent); }
.ctab:not(.ctab-on)::after { content: ""; position: absolute; right: 0; top: 6px; height: 16px; border-right: 2px solid #a9c5f7; }
.newtab { width: 34px; height: 28px; display: grid; place-items: center; color: #333; }
.wctl { margin-left: auto; display: flex; gap: 36px; padding: 9px 18px 0 0; }
.wctl-dim { color: #888; }
.urlbar { height: 47px; background: #fff; border-bottom: 1px solid #dcdcdc; display: flex; align-items: center; }
.navs { width: 157px; padding-left: 15px; display: flex; gap: 22px; color: #444; align-items: center; }
.omni { flex: 1; height: 34px; border-radius: 17px; background: #ebeef7; display: flex; align-items: center; padding: 0 16px 0 4px; }
.tune { width: 24px; height: 24px; border-radius: 12px; background: #fff; display: grid; place-items: center; }
.url { flex: 1; padding-left: 8px; font-size: 13px; color: #333; }
.ext { display: flex; align-items: center; width: 174px; padding-left: 18px; }
.vline { width: 2px; height: 16px; background: #c9dbf9; margin: 0 18px 0 16px; }
.avatar { width: 20px; height: 20px; border-radius: 50%; background: #3584d0; color: #fff; font-size: 11px; line-height: 20px; text-align: center; margin: 0 18px; }

/* CRM page */
.crm { flex: 1; background: #eee; display: flex; flex-direction: column; padding: 2px 2px 0; }
.crmbar { height: 30px; border-top: 1px solid #6d8fd4; border-bottom: 2px solid #6d8fd4; background: linear-gradient(#dbe6f8 0 2px, #b4c9ec 3px 12px, #a9c0e8 13px, #c8d9f5 26px); display: flex; }
.links { display: flex; align-items: flex-start; gap: 27px; width: 176px; height: 22px; padding: 3px 0 0 12px; background: linear-gradient(#a3b8e6, #738fcc 50%, #9ab3e2); font: 12px/16px "DejaVu Sans Condensed", sans-serif; }
.links a { color: #000; }
.barprint { margin: 4px 24px 0 3px; }
.apptabs { display: flex; align-items: flex-end; height: 27px; }
.atab { height: 24px; padding: 0 22px 0 20px; margin-left: -10px; display: flex; align-items: center; gap: 8px; color: #fff; background: linear-gradient(#7f9bd8, #4a66a8); clip-path: polygon(0 0, calc(100% - 10px) 0, 100% 100%, 10px 100%); font-size: 11px; white-space: nowrap; }
.atab b { padding-top: 4px; font: bold 11px/12px "Liberation Sans", sans-serif; }
.atab-on { height: 26px; margin: 0; padding-left: 18px; background: linear-gradient(#86a2ea, #a9c0fb); clip-path: polygon(0 0, calc(100% - 10px) 0, 100% 100%, 0 100%); }
.tools { margin-left: auto; display: flex; align-items: center; padding-right: 5px; }
.caret { border: 5px solid transparent; border-top: 7px solid #000; border-bottom: 0; }
.caret-s { display: inline-block; border-width: 4px; border-top-width: 4px; margin: 0 0 3px 7px; }
.crmsearch { width: 124px; height: 23px; margin: 0 14px 0 11px; padding: 0 7px; border: 1px solid #bbb; border-radius: 12px; background: #f4f9ff; font: 11px/14px "Liberation Sans", sans-serif; }
.crmsearch::placeholder { color: #777; opacity: 1; }
.ic-person { width: 12px; height: 16px; margin-right: 20px; }
.status { display: flex; align-items: center; font: 11px/16px "DejaVu Sans", sans-serif; }
.green { width: 15px; height: 15px; background: #66d95a; margin-right: 8px; }
.ic-mail { width: 23px; height: 13px; margin: 0 10px 0 13px; }
.ic-phx { width: 22px; height: 20px; margin: 0 8px 0 9px; }
.user { width: 58px; color: #fff; font: bold 9px/14px "DejaVu Sans Condensed", sans-serif; }
.qmark { width: 18px; height: 18px; margin-left: 5px; border: 1px solid #5d7fb5; border-radius: 50%; background: #8ba6cf; color: #fff; font: bold 12px/16px "DejaVu Sans Condensed", sans-serif; text-align: center; }
.crmbody { flex: 1; display: flex; }
.side { width: 218px; padding: 3px 1px 0; display: flex; flex-direction: column; }
.sidehead { height: 26px; display: flex; align-items: center; padding: 0 3px 0 5px; background: linear-gradient(#fff, #eee); border-bottom: 1px solid #bbb; white-space: nowrap; }
.sidehead a { color: #5a77b8; font-weight: 600; margin-left: auto; }
.ic-push { width: 10px; height: 14px; margin-left: 11px; }
.menu { flex: 1; background: linear-gradient(90deg, #fff, #eeedf5 45%, #dadae8); }
.msearch { display: flex; align-items: center; gap: 8px; padding: 3px 4px 0; height: 26px; color: #888; }
.msearch b { color: #1a0a90; font: bold 11px/16px "DejaVu Sans", sans-serif; }
.mi { height: 32px; display: flex; align-items: center; gap: 7px; padding-left: 8px; font: 12px/16px "DejaVu Sans Condensed", sans-serif; }
.mi-fav { height: 24px; padding-left: 20px; }
.mi-fav + .mi { margin-top: 4px; }
.tri { width: 6px; height: 9px; }
.submenu { padding: 0 0 8px 34px; }
.smi { height: 32px; display: flex; align-items: center; font-size: 11px; color: #222; }
.smi:first-child { margin-top: -8px; }
.smi span { padding: 2px 3px; border: 1px solid transparent; }
.smi .picked { border-color: #8fd3f2; background: linear-gradient(#dff1fc, #b0daf3); color: #334; }
.work { flex: 1; min-width: 0; padding: 23px 34px 0 5px; position: relative; display: flex; flex-direction: column; }
.helpdot { position: absolute; top: 11px; right: 36px; width: 16px; height: 16px; }
.filters { display: grid; grid-template-columns: 323px 1fr 140px 578px; column-gap: 12px; row-gap: 5px; font: 11px/20px "DejaVu Sans Condensed", sans-serif; padding-bottom: 4px; }
.filters label { text-align: right; }
.field { display: flex; height: 20px; }
.code { width: 66px; border: 1px solid #a9bddd; background: #fff; }
.code-ro { width: 51px; padding-left: 3px; border-color: #7f9db9; background: linear-gradient(#f8f8fc, #ccccdc); }
.desc { width: 186px; padding-left: 3px; border: 1px solid #7f9db9; background: linear-gradient(#f4f4fa, #ccccdc); }
.look { width: 22px; border: 1px solid #444; border-radius: 2px; background: linear-gradient(#fff, #d6d6e2); display: grid; place-items: center; }
.look-off { border-color: #bbb; opacity: .6; }
.sel { width: 210px; border: 1px solid #7f9db9; background: #fff; }
.date { width: 82px; border: 1px solid #a9bddd; background: #fff; }
.dd { width: 17px; border: 1px solid #a9bddd; border-left: 0; background: linear-gradient(#e3f0ff, #b3d0f5); display: grid; place-items: center; color: #223; }
.go { width: 46px; margin-left: 233px; border: 1px solid #7f9db9; background: linear-gradient(#fff, #d6d6e2); font: 11px/16px "Liberation Sans", sans-serif; }
.gridbar { height: 27px; background: linear-gradient(#b3bccb, #fafafa); display: flex; align-items: center; justify-content: flex-end; gap: 15px; padding-right: 22px; font: 12px/16px "DejaVu Sans Condensed", sans-serif; }
.gridbar a { color: #5a93f5; text-decoration: none; }
.gridbar i { width: 1px; height: 16px; background: #000; }
.grid { width: 100%; margin-top: 3px; border-collapse: collapse; table-layout: fixed; font: 12px/17px "DejaVu Sans", sans-serif; background: #fff; }
.grid th { height: 21px; padding: 0 9px; text-align: left; color: #fff; font-weight: bold; background: #8099cc; border: 1px solid #23408a; border-top-color: #9db0da; border-left-color: #c5d0e8; }
.grid td { height: 18px; padding: 0 9px; border: 1px solid #ccd5e8; }
.grid tr:nth-child(even) td { background: #f1f8ff; }
.grid .sub { color: #3a10f0; }
.grid tbody tr.cur td { background: #b0bfdf; border-top-color: #f5a623; }
.grid .cur td:first-child { outline: 2px solid #111; outline-offset: -1px; border-radius: 2px; }
.pager { height: 21px; margin-top: 275px; background: #8099cc; }
.watermark { margin: auto 0 52px auto; width: 285px; color: #bcbcbc; }
.watermark p { margin: 0; white-space: nowrap; }
.wm1 { font-size: 19px; line-height: 24px; }
.wm2 { font-size: 14px; line-height: 20px; }

/* taskbar */
.taskbar { height: 48px; border-top: 1px solid #a9b4c0; background: linear-gradient(90deg, #dfe9f3, #d0dfe9 15%, #d9dfea 30%, #dfecf5 48%, #d3dde9 60%, #d9dfeb 80%, #d7e6ee); display: flex; align-items: center; justify-content: space-between; color: #222; }
.taskbar-far .clock { color: #555; }
.weather { display: flex; align-items: center; gap: 9px; padding-left: 21px; width: 506px; }
.weather span { display: block; color: #555; }
.apps { display: flex; align-items: center; flex: 1; }
.tsearch { width: 217px; height: 31px; margin: 0 4px 0 12px; border: 1px solid #c0ccd8; border-radius: 16px; background: #f2f6f9; display: flex; align-items: center; padding-left: 10px; }
.tsearch input { flex: 1; padding-left: 9px; font-size: 13px; }
.tsearch input::placeholder { color: #555; opacity: 1; }
.tbrief { width: 51px; height: 27px; border-radius: 14px; background: #e2e6ea; display: grid; place-items: center; }
.ic-brief { width: 24px; height: 20px; }
.ti { width: 40px; height: 40px; margin: 0 2px; display: grid; place-items: center; position: relative; border-radius: 4px; }
.now { background: #edf2f6; box-shadow: 0 0 1px #99a; }
.run::after { content: ""; position: absolute; bottom: 1px; left: 17px; width: 6px; height: 3px; border-radius: 2px; background: #777f86; }
.now::after { left: 12px; width: 16px; background: #0a76d0; }
.tray { display: flex; align-items: center; padding-right: 21px; }
.flip { transform: rotate(180deg); }
.ic-od { margin: 0 16px 0 20px; }
.ic-vol { margin: 0 16px 0 8px; }
.clock { text-align: right; }
.ic-bell { margin-left: 8px; height: 16px; }

/* file explorer */
.explorer { background: #fff; }
.xtabs { height: 33px; background: #e8e8e8; border-bottom: 1px solid #d5d5d5; display: flex; padding: 1px 0 0 8px; }
.xtab { width: 240px; height: 32px; border-radius: 8px 8px 0 0; background: #f8f8f8; display: flex; align-items: center; gap: 10px; padding: 0 17px 0 9px; font-size: 11px; }
.xtab span { flex: 1; }
.xtabs .newtab { width: 44px; height: 32px; }
.xaddr { height: 47px; background: #f8f8f8; border-bottom: 1px solid #d2d2d2; display: flex; align-items: center; padding-right: 11px; font-size: 13px; }
.xnav { width: 201px; display: flex; gap: 34px; padding-left: 20px; color: #444; }
.crumbs { flex: 1; height: 32px; border-radius: 4px; background: #fdfdfd; display: flex; align-items: center; gap: 16px; padding-left: 13px; white-space: nowrap; color: #333; }
.crumbs svg:first-child { margin-right: 2px; }
.xsearch { width: 499px; height: 32px; margin-left: 8px; border-radius: 4px; background: #fdfdfd; display: flex; align-items: center; padding: 0 14px 0 15px; }
.xsearch input { flex: 1; }
.xsearch input::placeholder { color: #666; opacity: 1; }
.xcmd { height: 55px; border-bottom: 1px solid #d2d2d2; display: flex; align-items: center; font-size: 11px; }
.xcmd > i { width: 1px; height: 32px; background: #e2e2e2; margin: 0 2px; }
.ci { width: 48px; height: 32px; display: grid; place-items: center; }
.ci-more { width: 44px; }
.cb { display: flex; align-items: center; gap: 8px; }
.cb-new { width: 96px; padding-left: 20px; }
.cb-sort { width: 86px; padding-left: 14px; }
.cb-view { width: 93px; padding-left: 15px; }
.cb-det { margin-left: auto; padding-right: 25px; gap: 10px; }
.xbody { flex: 1; display: flex; }
.xside { width: 159px; border-right: 1px solid #ececec; padding: 6px 2px 0; overflow: hidden; font-size: 11px; color: #000; }
.xi { height: 32px; display: flex; align-items: center; gap: 5px; padding-left: 32px; white-space: nowrap; overflow: hidden; border-radius: 3px; }
.xi-tree { padding-left: 10px; }
.xi-tree .ch { margin-right: 9px; color: #888; }
.xi-on { background: #d9d9d9; }
.xside hr { margin: 15px 8px 16px; border: 0; border-top: 1px solid #cfcfcf; }
.pin { width: 12px; height: 14px; margin: 0 3px 0 auto; }
.xfiles { flex: 1; padding-left: 15px; font-size: 11px; }
.fhead, .frow { display: grid; grid-template-columns: 259px 143px 120px 77px; width: 599px; align-items: center; }
.fhead { height: 26px; color: #4d6580; width: 602px; }
.fhead span { height: 26px; line-height: 26px; border-right: 1px solid #e0e0e0; padding-left: 13px; margin-left: -7px; position: relative; }
.fhead span:first-child { margin: 0; padding-left: 16px; }
.sorted svg { position: absolute; top: 1px; left: 71px; color: #888; }
.grp { height: 28px; margin: 0 0 0 -9px; padding-bottom: 3px; display: flex; align-items: center; gap: 5px; font: 14px/20px "Open Sans", sans-serif; color: #1f3d8c; }
.grp-first { margin-top: 5px; }
.grp svg { color: #777; height: 7px; }
.frow { height: 27px; margin-bottom: 4px; border-radius: 2px; color: #6a6a6a; white-space: nowrap; }
.frow > span { padding-left: 6px; }
.frow .fn { display: flex; align-items: center; gap: 4px; padding-left: 4px; color: #000; }
.frow .sz { text-align: right; padding-right: 4px; }
.frow-on { background: #d9d9d9; }
.xstatus { height: 23px; display: flex; align-items: center; gap: 22px; padding: 0 6px 0 14px; font-size: 11px; color: #223a55; }
.vbtns { margin-left: auto; display: flex; }
.vb { width: 22px; height: 23px; display: grid; place-items: center; }
.vb-on { background: #cce8f6; border: 1px solid #2a9fd8; }
.vb i { width: 12px; height: 12px; border: 1px solid #000; border-bottom: 3px double #000; }
```
